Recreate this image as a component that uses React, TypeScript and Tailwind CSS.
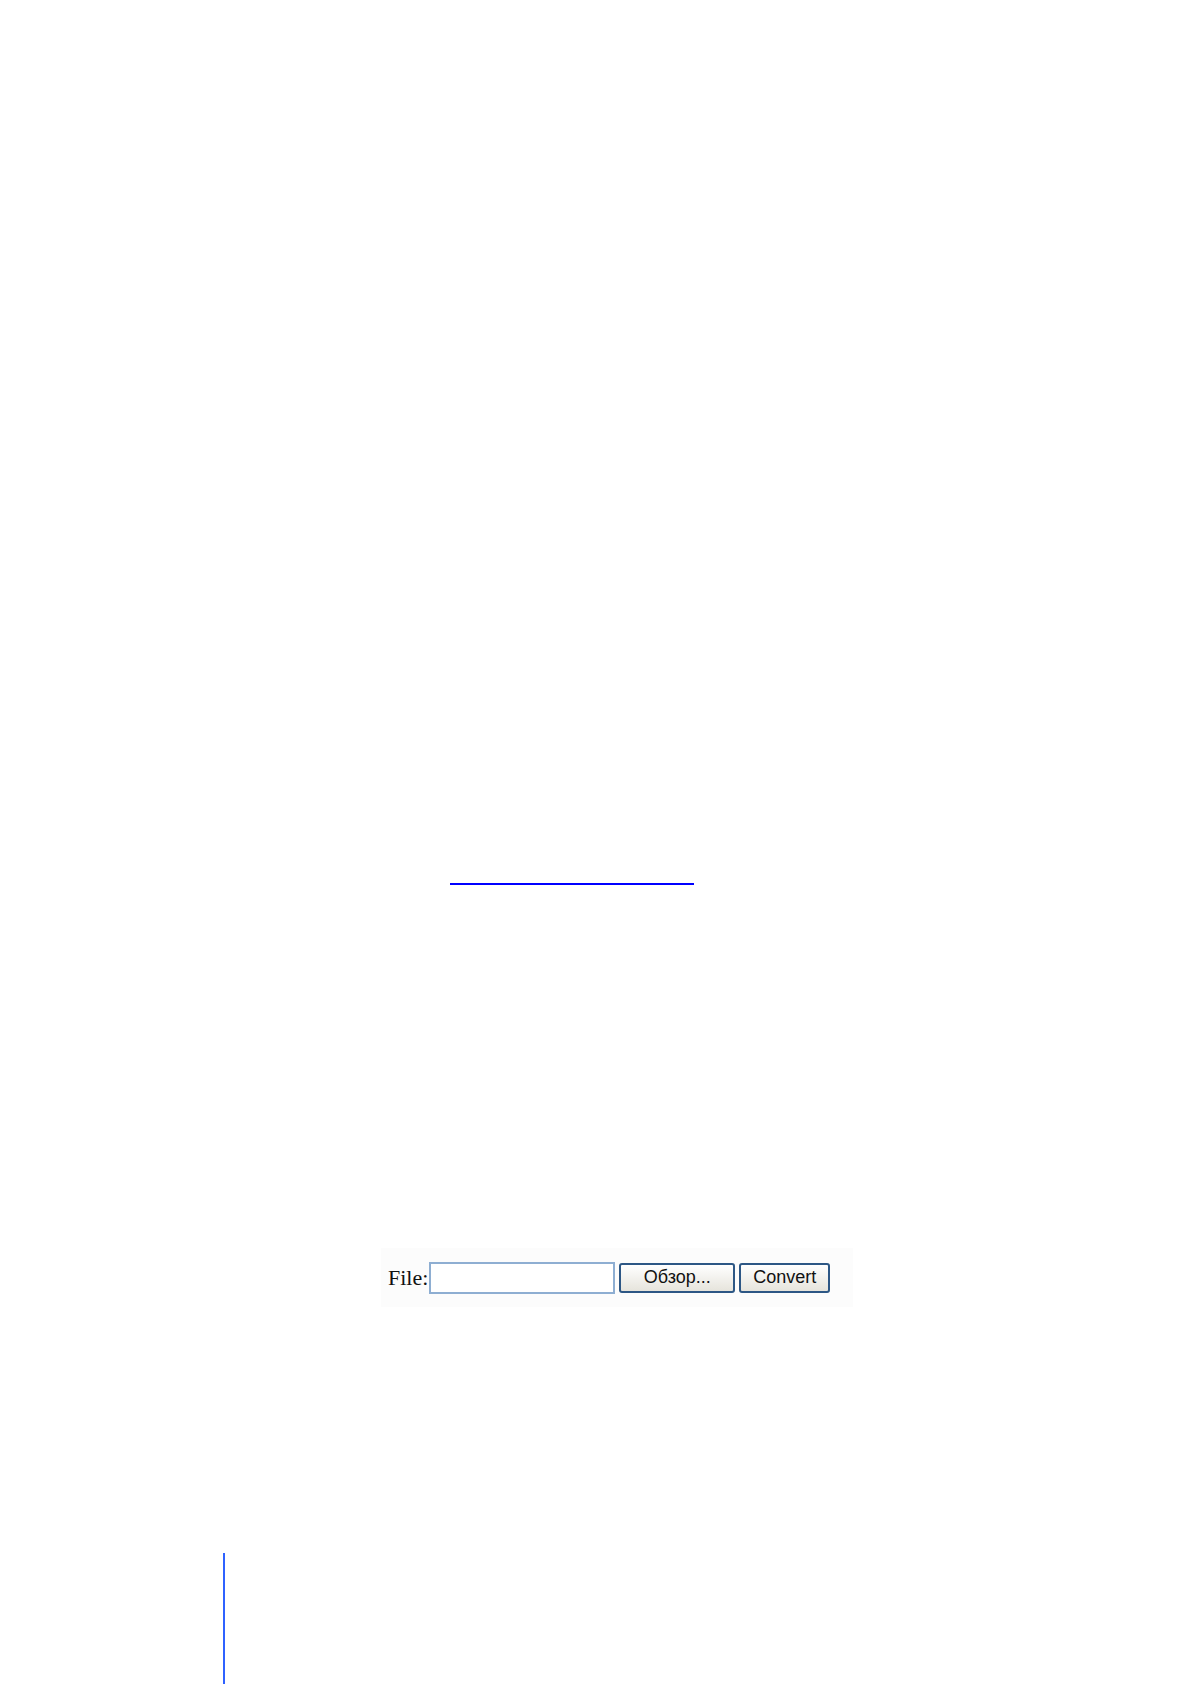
export default function App() {
  return (
    <div className="flex h-[1684px] w-[1191px] flex-col bg-white">
      <a href="#" className="ml-[450px] mt-[883px] block h-[2px] w-[244px] bg-[#0000ff]" aria-label="link"></a>
      <form
        className="ml-[381px] mt-[363px] flex h-[59px] w-[472px] items-center bg-[#fcfcfc] pl-[7px]"
        onSubmit={(e) => e.preventDefault()}
      >
        <label className="font-['Liberation_Serif',serif] text-[22px] leading-none text-[#111]">File:</label>
        <input
          type="text"
          className="ml-[1px] h-[32px] w-[186px] border-2 border-[#8eaed2] bg-white outline-none"
        />
        <button
          type="button"
          className="ml-[4px] flex h-[30px] w-[116px] items-center justify-center rounded-[3px] border-2 border-[#2d5785] bg-gradient-to-b from-white to-[#e6e4dc] font-['Liberation_Sans',sans-serif] text-[18px] text-[#111]"
        >
          Обзор...
        </button>
        <button
          type="submit"
          className="ml-[4px] flex h-[30px] w-[91px] items-center justify-center rounded-[3px] border-2 border-[#2d5785] bg-gradient-to-b from-white to-[#e6e4dc] font-['Liberation_Sans',sans-serif] text-[18px] text-[#111]"
        >
          Convert
        </button>
      </form>
      <div className="ml-[223px] mt-[246px] w-[2px] flex-1 bg-[#2f62ff]"></div>
    </div>
  )
}
